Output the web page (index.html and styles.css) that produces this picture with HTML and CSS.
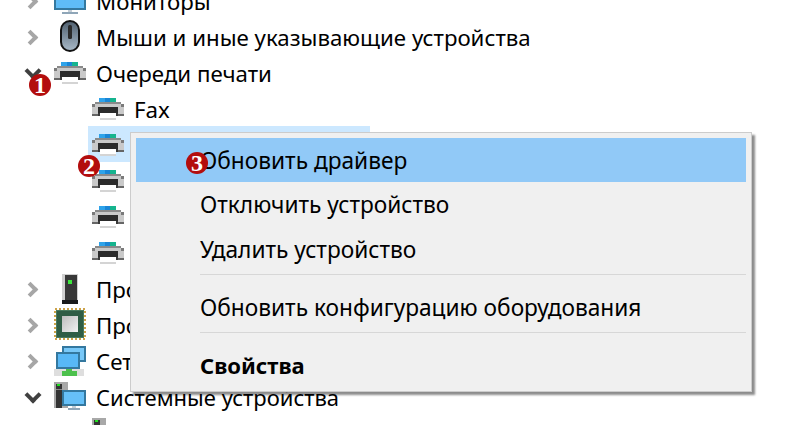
FILE: index.html
```html
<!DOCTYPE html>
<html lang="ru">
<head>
  <meta charset="UTF-8">
  <title>Диспетчер устройств</title>
  <link rel="stylesheet" href="styles.css">
</head>
<body>
  <svg class="defs" width="0" height="0">
    <defs>
      <linearGradient id="mouseBody" x1="0" y1="0" x2="0" y2="1">
        <stop offset="0" stop-color="#4f5f6e"/>
        <stop offset="1" stop-color="#a9bac9"/>
      </linearGradient>
      <linearGradient id="chipFace" x1="0" y1="0" x2="1" y2="1">
        <stop offset="0" stop-color="#bdbdbd"/>
        <stop offset="1" stop-color="#f2f2f2"/>
      </linearGradient>
    </defs>
    <symbol id="printer" viewBox="0 0 32 32" shape-rendering="crispEdges">
      <rect x="7" y="6" width="6" height="6" fill="#2ea3ea"/>
      <rect x="13" y="6" width="5" height="6" fill="#1a86d6"/>
      <rect x="18" y="6" width="6" height="6" fill="#16b48e"/>
      <rect x="26" y="10" width="2" height="2" fill="#1fe01f"/>
      <rect x="3" y="10" width="26" height="2" fill="#8a8a8a"/>
      <rect x="0" y="12" width="32" height="10" fill="#c9c9c9"/>
      <rect x="0" y="12" width="3" height="3" fill="#7a7a7a"/>
      <rect x="29" y="12" width="3" height="3" fill="#7a7a7a"/>
      <rect x="0" y="22" width="32" height="2" fill="#666"/>
      <rect x="6" y="15" width="20" height="6" fill="#2b2b2b"/>
      <rect x="6" y="21" width="20" height="3" fill="#3a3a3a"/>
      <rect x="8" y="21" width="16" height="5" fill="#fff"/>
      <rect x="8" y="26" width="16" height="2" fill="#d4d4d4"/>
    </symbol>
    <symbol id="tower" viewBox="0 0 32 32" shape-rendering="crispEdges">
      <rect x="0" y="2" width="14" height="26" fill="#a8a8a8"/>
      <rect x="2" y="4" width="6" height="24" fill="#333"/>
      <rect x="3" y="4" width="3" height="2" fill="#1fe01f"/>
      <rect x="2" y="9" width="6" height="1" fill="#888"/>
    </symbol>
  </svg>

  <div class="tree">
    <div class="row"><span class="arrow closed"></span>
      <svg class="icon" viewBox="0 0 32 32" shape-rendering="crispEdges"><rect y="5" width="32" height="21" fill="#34789f"/><rect x="2" y="5" width="28" height="19" fill="#5fbcf7"/><rect x="14" y="26" width="4" height="2" fill="#c4ced6"/><rect x="8" y="28" width="16" height="2" fill="#8fa6b8"/></svg>
      <span>Мониторы</span></div>
    <div class="row"><span class="arrow closed"></span>
      <svg class="icon" viewBox="0 0 32 32"><rect x="7" y="1" width="18" height="30" rx="9" fill="url(#mouseBody)" stroke="#111" stroke-width="2"/><rect x="14" y="5" width="4" height="14" rx="1.5" fill="#2a2a2a"/></svg>
      <span>Мыши и иные указывающие устройства</span></div>
    <div class="row"><span class="arrow open"></span>
      <svg class="icon"><use href="#printer"/></svg>
      <span>Очереди печати</span></div>
    <div class="row child"><svg class="icon"><use href="#printer"/></svg><span>Fax</span></div>
    <div class="row child selected"><svg class="icon"><use href="#printer"/></svg></div>
    <div class="row child"><svg class="icon"><use href="#printer"/></svg></div>
    <div class="row child"><svg class="icon"><use href="#printer"/></svg></div>
    <div class="row child"><svg class="icon"><use href="#printer"/></svg></div>
    <div class="row"><span class="arrow closed"></span>
      <svg class="icon" viewBox="0 0 32 32" shape-rendering="crispEdges"><rect x="8" y="2" width="16" height="26" fill="#d0d0d0"/><rect x="11" y="3" width="12" height="25" fill="#383838"/><rect x="14" y="8" width="4" height="4" fill="#3de83d"/><rect x="8" y="28" width="16" height="4" fill="#1a1a1a"/></svg>
      <span>Программные устройства</span></div>
    <div class="row"><span class="arrow closed"></span>
      <svg class="icon" viewBox="0 0 32 32" shape-rendering="crispEdges"><rect x="1" y="1" width="30" height="30" fill="none" stroke="#cda349" stroke-width="2" stroke-dasharray="2 2"/><rect x="2" y="2" width="28" height="28" fill="#4a7a5e"/><rect x="3" y="3" width="26" height="26" fill="#2f5d45"/><rect x="8" y="8" width="16" height="16" fill="url(#chipFace)"/></svg>
      <span>Процессоры</span></div>
    <div class="row"><span class="arrow closed"></span>
      <svg class="icon" viewBox="0 0 32 32" shape-rendering="crispEdges"><rect x="8" y="2" width="24" height="16" fill="#34789f"/><rect x="10" y="4" width="20" height="12" fill="#78c8f8"/><rect x="2" y="8" width="24" height="17" fill="#34789f"/><rect x="4" y="10" width="20" height="13" fill="#58b8f6"/><rect x="0" y="25" width="30" height="7" fill="#dedede"/><rect x="8" y="27" width="15" height="5" fill="#4cc04c"/><rect x="12" y="25" width="6" height="2" fill="#4cc04c"/></svg>
      <span>Сетевые адаптеры</span></div>
    <div class="row"><span class="arrow open"></span>
      <svg class="icon" viewBox="0 0 32 32" shape-rendering="crispEdges"><use href="#tower" width="32" height="32"/><rect x="8" y="10" width="24" height="16" fill="#34789f"/><rect x="10" y="12" width="20" height="12" fill="#66c0f8"/><rect x="18" y="26" width="4" height="2" fill="#c4ced6"/><rect x="14" y="28" width="12" height="2" fill="#8fa6b8"/></svg>
      <span class="narrow">Системные устройства</span></div>
    <div class="row child"><svg class="icon"><use href="#tower"/></svg><span>Системный таймер</span></div>
  </div>

  <!-- контекстное меню поверх дерева -->
  <div class="menu">
    <div class="item hover">Обновить драйвер</div>
    <div class="item">Отключить устройство</div>
    <div class="item">Удалить устройство</div>
    <div class="sep"></div>
    <div class="item">Обновить конфигурацию оборудования</div>
    <div class="sep"></div>
    <div class="item bold">Свойства</div>
  </div>

  <span class="badge one">1</span>
  <span class="badge two">2</span>
  <span class="badge three">3</span>
</body>
</html>
```

FILE: styles.css
```css
html, body {
  height: 425px;
  overflow: hidden;
}

body {
  margin: 0;
  background-color: #fff;
  color: #000;
  font-family: 'Noto Sans', sans-serif;
  font-size: 22.25px;
}

.defs {
  position: absolute;
}

.tree {
  height: 443px;
  margin-top: -18px;
  overflow: hidden;
}

.row {
  display: flex;
  align-items: center;
  height: 36px;
  padding-left: 22px;
  white-space: nowrap;
}

.row > span:last-child {
  padding-top: 2px;
}

.row > span.narrow {
  font-size: 22px;
}

.row.child {
  padding-left: 92px;
}

.row.selected {
  box-sizing: border-box;
  width: 282px;
  margin-left: 88px;
  padding-left: 4px;
  background-color: #cce8ff;
}

.arrow {
  width: 22px;
  height: 22px;
  margin-right: 10px;
  position: relative;
  flex: none;
}

.arrow::before {
  content: "";
  position: absolute;
  box-sizing: border-box;
  border-top: 4px solid #a6a6a6;
  border-right: 4px solid #a6a6a6;
}

.arrow.closed::before {
  left: 3px;
  top: 7px;
  width: 11px;
  height: 11px;
  transform: rotate(45deg);
}

.arrow.open::before {
  left: 5px;
  top: 4px;
  width: 12px;
  height: 12px;
  border-color: #404040;
  transform: rotate(135deg);
}

.icon {
  width: 32px;
  height: 32px;
  flex: none;
  margin-right: 10px;
}

.menu {
  position: absolute;
  left: 130px;
  top: 132px;
  width: 610px;
  padding: 5px 5px 3px;
  font-size: 22.7px;
  background-color: #f0f0f0;
  border: 1px solid #ccc;
  box-shadow: 3px 3px 2px rgba(0, 0, 0, 0.45);
}

.item {
  height: 45px;
  line-height: 45px;
  padding-left: 64px;
  white-space: nowrap;
}

.item.hover {
  height: 44px;
  background-color: #91c9f7;
}

.item.bold {
  font-size: 22px;
  font-weight: bold;
}

.sep {
  height: 1px;
  margin: 2px 0 10px 64px;
  background-color: #d7d7d7;
}

.badge {
  position: absolute;
  width: 22px;
  height: 22px;
  line-height: 23px;
  border-radius: 50%;
  background-color: #b30d0d;
  color: #fff;
  font-family: 'Liberation Serif', serif;
  font-size: 24px;
  font-weight: bold;
  text-align: center;
}

.badge.one {
  left: 29px;
  top: 74px;
}

.badge.two {
  left: 78px;
  top: 155px;
}

.badge.three {
  left: 186px;
  top: 152px;
}
```
